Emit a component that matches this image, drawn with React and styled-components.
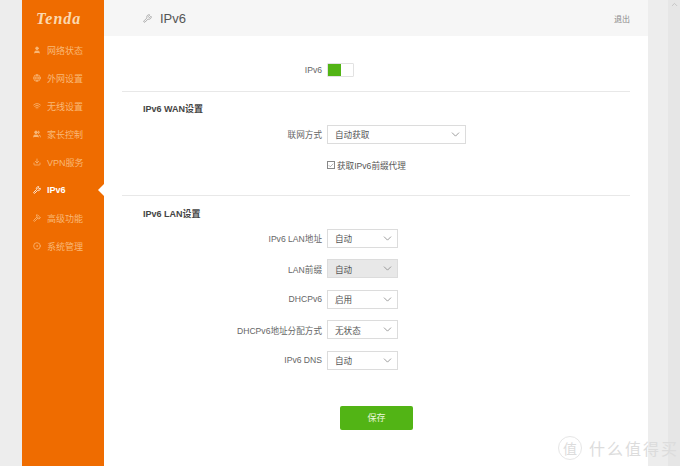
import React from 'react';
import styled, { createGlobalStyle } from 'styled-components';
import { ChevronDown, ChevronUp, Check, User, Globe, Wifi, Users, Download, Wrench, Hammer, CircleDot } from 'lucide-react';

const GlobalStyle = createGlobalStyle`
  html, body { margin: 0; padding: 0; height: 100%; overflow: hidden; }
  body { font-family: "Liberation Sans", "Noto Sans CJK SC", sans-serif; background: #ededed; }
`;

const Page = styled.div`
  position: relative;
  display: flex;
  width: 680px;
  height: 466px;
  padding-left: 22px;
  box-sizing: border-box;
  overflow: hidden;
  background: #ededed;
`;

const Sidebar = styled.aside`
  width: 82px;
  flex: none;
  background: #ef6c00;
  display: flex;
  flex-direction: column;
`;

const Logo = styled.div`
  height: 36px;
  padding-left: 14px;
  line-height: 38px;
  font-family: "Liberation Serif", serif;
  font-size: 16px;
  font-weight: 700;
  font-style: italic;
  letter-spacing: 1px;
  color: #fbd9b0;
`;

const NavList = styled.nav`
  display: flex;
  flex-direction: column;
`;

const NavItem = styled.div`
  position: relative;
  height: 28px;
  display: flex;
  align-items: center;
  gap: 6px;
  padding-left: 11px;
  font-size: 9px;
  color: ${p => (p.$active ? '#ffffff' : '#f9b877')};
  font-weight: ${p => (p.$active ? 700 : 400)};
  svg { flex: none; }
  ${p => p.$active && `
    &::after {
      content: '';
      position: absolute;
      right: 0;
      top: 8px;
      border: 6px solid transparent;
      border-left: 0;
      border-right-color: #ffffff;
    }
  `}
`;

const Main = styled.main`
  width: 544px;
  flex: none;
  background: #ffffff;
  display: flex;
  flex-direction: column;
`;

const Header = styled.header`
  height: 36px;
  flex: none;
  background: #f6f6f6;
  display: flex;
  align-items: center;
  padding: 0 18px 0 39px;
  color: #666;
`;

const HeaderTitle = styled.h1`
  margin: 0 0 0 8px;
  font-size: 13px;
  font-weight: 400;
  color: #555;
  flex: 1;
`;

const Logout = styled.a`
  font-size: 8px;
  color: #888;
`;

const Content = styled.div`
  padding: 25px 18px 0;
  display: flex;
  flex-direction: column;
`;

const Row = styled.div`
  display: grid;
  grid-template-columns: 200px 1fr;
  column-gap: 5px;
  align-items: center;
  height: ${p => p.$h || 30.5}px;
  font-size: 8.6px;
`;

const Label = styled.label`
  text-align: right;
  color: #666;
  white-space: nowrap;
`;

const Toggle = styled.div`
  width: 27px;
  height: 14px;
  box-sizing: border-box;
  border: 1px solid #e2e2e2;
  border-radius: 1px;
  background: #fff;
  &::before {
    content: '';
    display: block;
    width: 13px;
    height: 12px;
    background: #52b415;
  }
`;

const Divider = styled.hr`
  margin: ${p => p.$mt}px 0 0;
  border: 0;
  border-top: 1px solid #e8e8e8;
`;

const SectionTitle = styled.h2`
  margin: ${p => p.$mt}px 0 0 21px;
  height: 12px;
  line-height: 12px;
  font-size: 9px;
  font-weight: 700;
  color: #444;
`;

const Select = styled.div`
  width: ${p => p.$w}px;
  height: ${p => p.$h}px;
  box-sizing: border-box;
  border: 1px solid #dcdcdc;
  background: ${p => (p.$disabled ? '#e8e8e8' : '#fff')};
  display: flex;
  align-items: center;
  justify-content: space-between;
  padding: 0 3px 0 7px;
  color: #555;
  svg { color: #888; }
`;

const CheckLine = styled.div`
  display: flex;
  align-items: center;
  gap: 2px;
  color: #555;
  font-size: 8.6px;
`;

const CheckBox = styled.span`
  width: 8px;
  height: 8px;
  box-sizing: border-box;
  border: 1px solid #888;
  display: flex;
  align-items: center;
  justify-content: center;
  color: #666;
`;

const SaveButton = styled.button`
  display: block;
  margin: 30px 0 0 218px;
  width: 73px;
  height: 24px;
  border: 0;
  border-radius: 2px;
  background: #52b415;
  color: #eaf7de;
  font-family: inherit;
  font-size: 9px;
`;

const Scrollbar = styled.div`
  width: 12px;
  margin-left: 20px;
  flex: none;
  background: #e6e6e6;
  display: flex;
  justify-content: center;
  color: #bbb;
`;

const Watermark = styled.div`
  position: absolute;
  right: 1px;
  bottom: 6px;
  display: flex;
  align-items: center;
  gap: 7px;
  font-size: 16px;
  letter-spacing: 2px;
  color: #dcdcdc;
`;

const WatermarkBadge = styled.span`
  width: 22px;
  height: 22px;
  border: 1px solid #e6e6e6;
  border-radius: 50%;
  display: flex;
  align-items: center;
  justify-content: center;
  font-size: 14px;
  letter-spacing: 0;
`;

const navItems = [
  { label: '网络状态', Icon: User, filled: true },
  { label: '外网设置', Icon: Globe },
  { label: '无线设置', Icon: Wifi },
  { label: '家长控制', Icon: Users, filled: true },
  { label: 'VPN服务', Icon: Download },
  { label: 'IPv6', Icon: Wrench, active: true },
  { label: '高级功能', Icon: Hammer },
  { label: '系统管理', Icon: CircleDot },
];

const lanRows = [
  { label: 'IPv6 LAN地址', value: '自动' },
  { label: 'LAN前缀', value: '自动', disabled: true },
  { label: 'DHCPv6', value: '启用' },
  { label: 'DHCPv6地址分配方式', value: '无状态' },
  { label: 'IPv6 DNS', value: '自动' },
];

function Dropdown({ value, w = 71, h = 19, disabled }) {
  return (
    <Select $w={w} $h={h} $disabled={disabled}>
      {value}
      <ChevronDown size={13} strokeWidth={1.5} />
    </Select>
  );
}

export default function App() {
  return (
    <Page>
      <GlobalStyle />
      <Sidebar>
        <Logo>Tenda</Logo>
        <NavList>
          {navItems.map(({ label, Icon, active, filled }) => (
            <NavItem key={label} $active={active}>
              <Icon size={8} strokeWidth={2.4} fill={filled ? 'currentColor' : 'none'} />
              {label}
            </NavItem>
          ))}
        </NavList>
      </Sidebar>
      <Main>
        <Header>
          <Wrench size={9} strokeWidth={2} color="#999" />
          <HeaderTitle>IPv6</HeaderTitle>
          <Logout>退出</Logout>
        </Header>
        <Content>
          <Row $h={18}>
            <Label>IPv6</Label>
            <Toggle />
          </Row>
          <Divider $mt={12} />
          <SectionTitle $mt={11}>IPv6 WAN设置</SectionTitle>
          <Row $h={38}>
            <Label>联网方式</Label>
            <Dropdown value="自动获取" w={139} h={19} />
          </Row>
          <Row $h={24}>
            <span />
            <CheckLine>
              <CheckBox><Check size={7} strokeWidth={2} /></CheckBox>
              获取IPv6前缀代理
            </CheckLine>
          </Row>
          <Divider $mt={18} />
          <SectionTitle $mt={12}>IPv6 LAN设置</SectionTitle>
          <Row $h={3} />
          {lanRows.map(row => (
            <Row key={row.label}>
              <Label>{row.label}</Label>
              <Dropdown value={row.value} disabled={row.disabled} />
            </Row>
          ))}
          <SaveButton>保存</SaveButton>
        </Content>
      </Main>
      <Scrollbar><ChevronUp size={9} /></Scrollbar>
      <Watermark>
        <WatermarkBadge>值</WatermarkBadge>
        什么值得买
      </Watermark>
    </Page>
  );
}
